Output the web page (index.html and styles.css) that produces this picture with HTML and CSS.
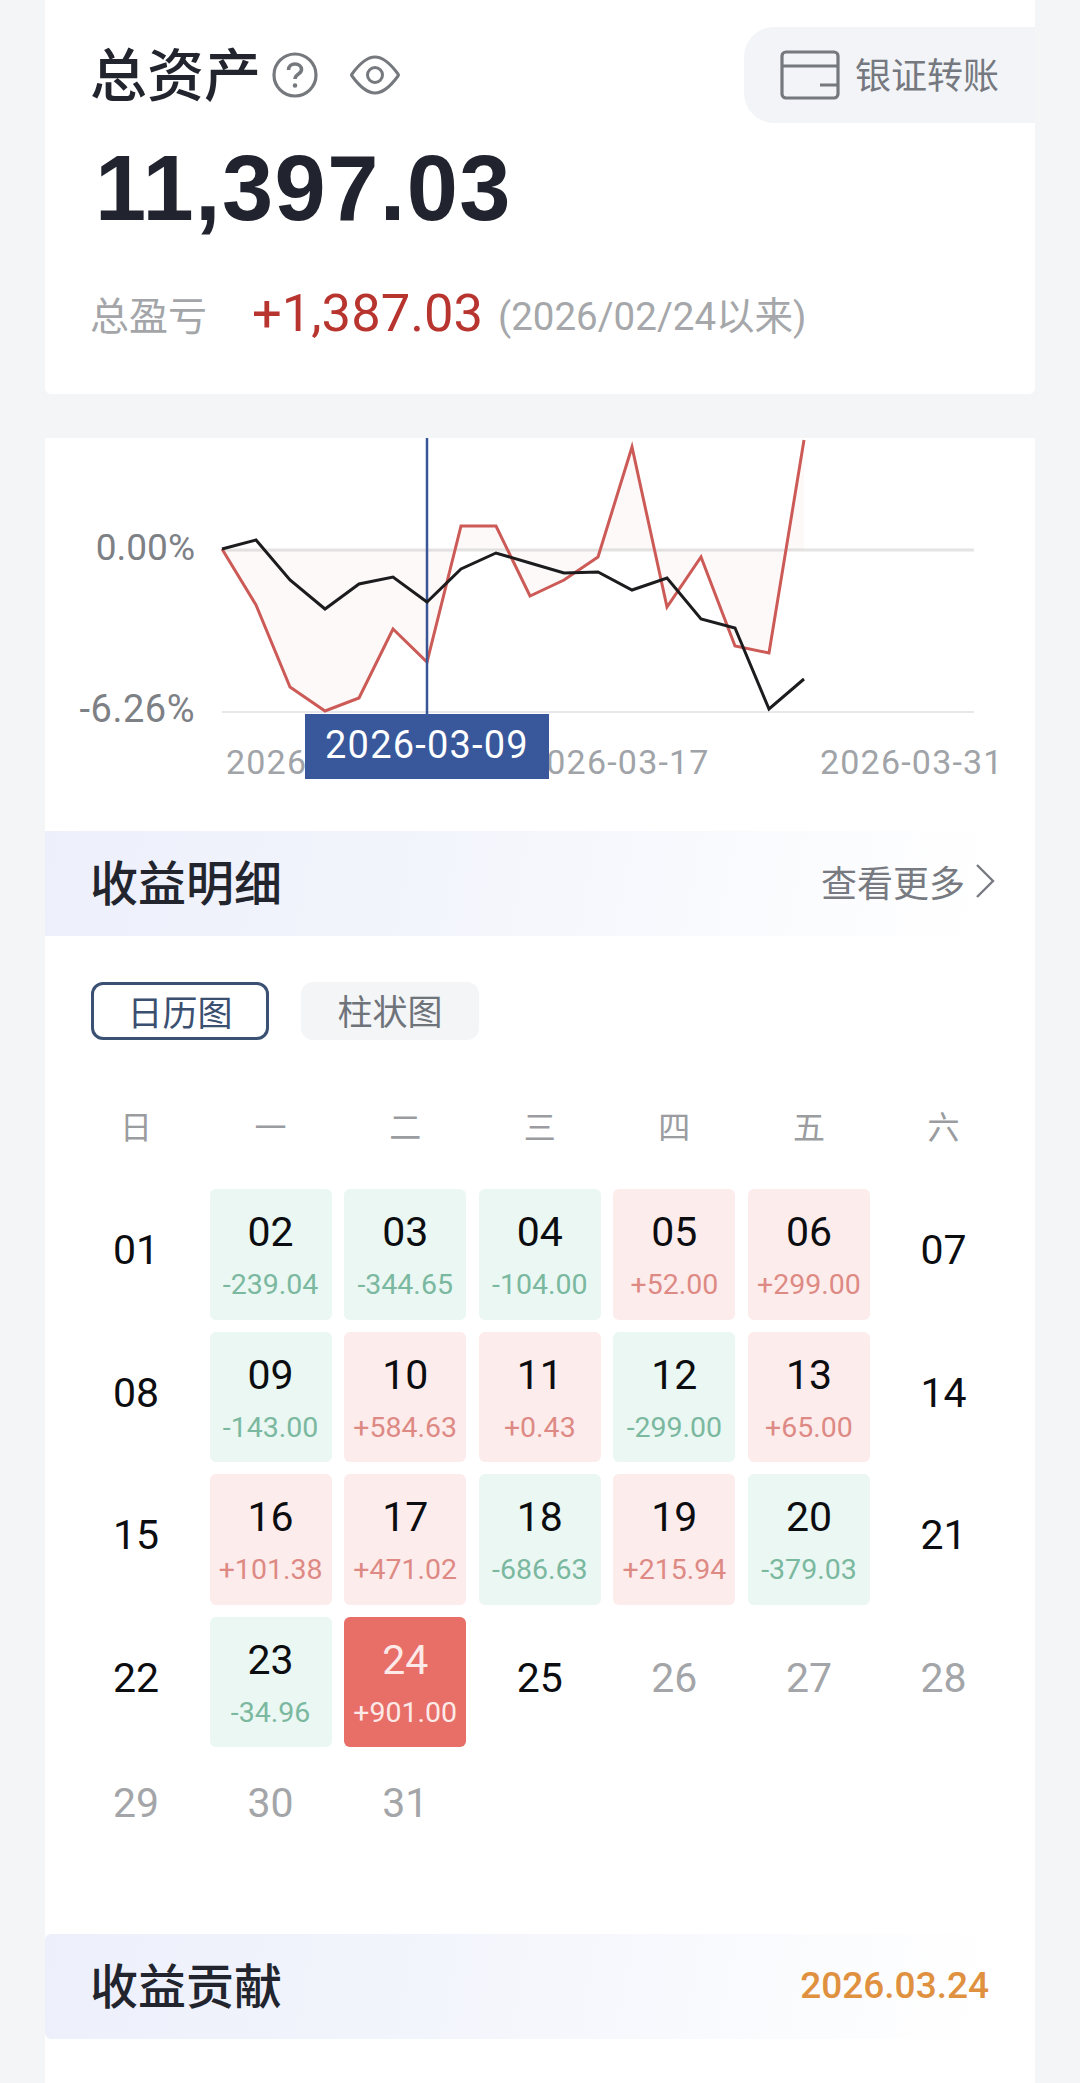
FILE: index.html
```html
<!DOCTYPE html>
<html lang="zh-CN">
<head>
  <meta charset="UTF-8" />
  <title>总资产</title>
  <link rel="stylesheet" href="styles.css">
</head>
<body>

  <!-- Summary -->
  <section class="card summary">
    <div class="summary-head">
      <h1>总资产</h1>
      <svg class="icon-help" viewBox="0 0 46 46">
        <circle cx="23" cy="23" r="21" fill="none" stroke="#75787d" stroke-width="3.200"/>
        <path d="M16.500 18c0-3.800 2.900-6 6.500-6s6.500 2.300 6.500 5.500c0 4.700-6.500 4.600-6.500 9.500" fill="none" stroke="#75787d" stroke-width="3.600"/>
        <circle cx="23" cy="33.500" r="2.300" fill="#75787d"/>
      </svg>
      <svg class="icon-eye" viewBox="0 0 52 40">
        <path d="M3 19C11 8 18 2 26 2s15 6 23 17q1 1 0 2C41 32 34 38 26 38S11 32 3 21q-1-1 0-2z" fill="none" stroke="#75787d" stroke-width="3" stroke-linejoin="round"/>
        <circle cx="26" cy="20" r="7.500" fill="none" stroke="#75787d" stroke-width="3"/>
      </svg>
      <a class="transfer">
        <svg class="icon-bank" viewBox="0 0 60 50">
          <rect x="2" y="2" width="56" height="46" rx="4" fill="none" stroke="#75787d" stroke-width="3.200"/>
          <path d="M2 16h56M40 35h18" fill="none" stroke="#75787d" stroke-width="3.200"/>
        </svg>
        <span>银证转账</span>
      </a>
    </div>
    <div class="total">11,397.03</div>
    <div class="profit">
      <span class="profit-label">总盈亏</span>
      <span class="profit-value">+1,387.03</span>
      <span class="profit-since">(2026/02/24以来)</span>
    </div>
  </section>

  <!-- Trend chart -->
  <section class="card chart">
    <svg class="chart-svg" viewBox="45 438 990 393">
      <line class="line-zero" x1="222" y1="550" x2="974" y2="550"/>
      <line class="line-low" x1="222" y1="712" x2="974" y2="712"/>
      <polygon class="area" points="222,549 256,605 290,687 325,711 359,698 393,629 427,662 461,526 496,526 530,596 564,580 598,557 632,447 667,607 701,557 735,646 769,653 804,440 804,550 222,550"/>
      <polyline class="line-red" points="222,549 256,605 290,687 325,711 359,698 393,629 427,662 461,526 496,526 530,596 564,580 598,557 632,447 667,607 701,557 735,646 769,653 804,440"/>
      <line class="crosshair" x1="427" y1="438" x2="427" y2="714"/>
      <polyline class="line-black" points="222,549 256,540 290,580 325,609 359,584 393,577 427,602 461,569 496,553 530,563 564,573 598,572 632,590 667,578 701,619 735,628 769,709 804,679"/>
      <text class="axis-y" x="195" y="560">0.00%</text>
      <text class="axis-y axis-neg" x="195" y="722">-6.26%</text>
      <text class="axis-x" x="226" y="774">2026</text>
      <text class="axis-x" x="526" y="774">2026-03-17</text>
      <text class="axis-x" x="820" y="774">2026-03-31</text>
      <rect class="tip-box" x="305" y="714" width="244" height="65"/>
      <text class="tip-text" x="427" y="758">2026-03-09</text>
    </svg>
  </section>

  <!-- Income detail -->
  <section class="card detail">
    <div class="section-head">
      <h2>收益明细</h2>
      <a class="more">查看更多
        <svg class="icon-chevron" viewBox="0 0 20 34">
          <path d="M2 1l16 16L2 33" fill="none" stroke="#777a80" stroke-width="2.400"/>
        </svg>
      </a>
    </div>

    <div class="tabs">
      <button class="tab active">日历图</button>
      <button class="tab">柱状图</button>
    </div>

    <div class="week">
      <span>日</span><span>一</span><span>二</span><span>三</span><span>四</span><span>五</span><span>六</span>
    </div>

    <div class="calendar">
      <div class="day"><b>01</b></div>
      <div class="day down"><b>02</b><small>-239.04</small></div>
      <div class="day down"><b>03</b><small>-344.65</small></div>
      <div class="day down"><b>04</b><small>-104.00</small></div>
      <div class="day up"><b>05</b><small>+52.00</small></div>
      <div class="day up"><b>06</b><small>+299.00</small></div>
      <div class="day"><b>07</b></div>

      <div class="day"><b>08</b></div>
      <div class="day down"><b>09</b><small>-143.00</small></div>
      <div class="day up"><b>10</b><small>+584.63</small></div>
      <div class="day up"><b>11</b><small>+0.43</small></div>
      <div class="day down"><b>12</b><small>-299.00</small></div>
      <div class="day up"><b>13</b><small>+65.00</small></div>
      <div class="day"><b>14</b></div>

      <div class="day"><b>15</b></div>
      <div class="day up"><b>16</b><small>+101.38</small></div>
      <div class="day up"><b>17</b><small>+471.02</small></div>
      <div class="day down"><b>18</b><small>-686.63</small></div>
      <div class="day up"><b>19</b><small>+215.94</small></div>
      <div class="day down"><b>20</b><small>-379.03</small></div>
      <div class="day"><b>21</b></div>

      <div class="day"><b>22</b></div>
      <div class="day down"><b>23</b><small>-34.96</small></div>
      <div class="day today"><b>24</b><small>+901.00</small></div>
      <div class="day"><b>25</b></div>
      <div class="day future"><b>26</b></div>
      <div class="day future"><b>27</b></div>
      <div class="day future"><b>28</b></div>

      <div class="day future short"><b>29</b></div>
      <div class="day future short"><b>30</b></div>
      <div class="day future short"><b>31</b></div>
    </div>

    <div class="section-head contrib">
      <h2>收益贡献</h2>
      <span class="date">2026.03.24</span>
    </div>
  </section>

</body>
</html>
```

FILE: styles.css
```css
/* Base */
html, body {
  margin: 0;
  padding: 0;
}

body {
  background: #f4f5f7;
  font-family: Roboto, "Noto Sans CJK SC", sans-serif;
  color: #22252e;
  height: 2083px;
  overflow: hidden;
}

.card {
  width: 990px;
  margin-left: 45px;
  background: #fff;
}

h1, h2 {
  margin: 0;
  font-family: "Noto Sans CJK SC", sans-serif;
}

/* Summary */
.summary {
  height: 394px;
  padding: 27px 0 0 48px;
  box-sizing: border-box;
  border-radius: 0 0 6px 6px;
}

.summary-head {
  display: flex;
  align-items: center;
  height: 96px;
}

.summary-head h1 {
  margin-left: -3px;
  padding-bottom: 8px;
  font-size: 57px;
  font-weight: 500;
  line-height: 88px;
}

.icon-help {
  width: 46px;
  height: 46px;
  margin-left: 11px;
}

.icon-eye {
  width: 52px;
  height: 40px;
  margin-left: 31px;
}

.transfer {
  display: flex;
  align-items: center;
  margin-left: auto;
  width: 291px;
  height: 96px;
  box-sizing: border-box;
  padding: 0 0 0 36px;
  gap: 15px;
  background: #f2f4f7;
  border-radius: 30px 0 0 30px;
  color: #75787f;
  font-family: "Noto Sans CJK SC", sans-serif;
  font-size: 36px;
}

.transfer span {
  padding-bottom: 4px;
}

.icon-bank {
  width: 60px;
  height: 50px;
}

.total {
  margin-top: 19px;
  margin-left: 2px;
  font-family: "Liberation Sans", sans-serif;
  font-size: 92px;
  font-weight: 700;
  letter-spacing: 1.4px;
  line-height: 92px;
  color: #21242f;
}

.profit {
  display: flex;
  align-items: center;
  margin-top: 49px;
  margin-left: -3px;
  height: 60px;
}

.profit-label {
  font-size: 39px;
  color: #a3a5a8;
  width: 162px;
}

.profit-value {
  font-size: 52.500px;
  color: #b8352f;
  width: 246px;
}

.profit-since {
  font-size: 38.500px;
  color: #a5a7aa;
}

/* Trend chart */
.chart {
  height: 393px;
  margin-top: 44px;
}

.chart-svg {
  display: block;
  width: 990px;
  height: 393px;
}

.line-zero {
  stroke: #e4e4e4;
  stroke-width: 3;
}

.line-low {
  stroke: #e6e8ec;
  stroke-width: 2;
}

.area {
  fill: #d9534a;
  fill-opacity: 0.035;
}

.line-red {
  fill: none;
  stroke: #cc5b57;
  stroke-width: 3;
}

.line-black {
  fill: none;
  stroke: #1c1c1e;
  stroke-width: 3;
}

.crosshair {
  stroke: #3a5596;
  stroke-width: 2.500;
}

.axis-y {
  font-size: 37px;
  fill: #7d8085;
  text-anchor: end;
}

.axis-neg {
  font-size: 38px;
  letter-spacing: 0.5px;
}

.axis-x {
  font-size: 34px;
  letter-spacing: 1.2px;
  fill: #a0a3a7;
}

.tip-box {
  fill: #38589b;
}

.tip-text {
  font-size: 38px;
  letter-spacing: 1.200px;
  fill: #fff;
  text-anchor: middle;
}

/* Income detail */
.detail {
  height: 1252px;
}

.section-head {
  display: flex;
  align-items: center;
  justify-content: space-between;
  height: 105px;
  box-sizing: border-box;
  padding: 0 40px 0 45px;
  background: linear-gradient(100deg, #edf0fb 0%, #f3f5fc 40%, #fff 95%);
}

.section-head h2 {
  padding-bottom: 8px;
  font-size: 48px;
  font-weight: 500;
}

.more {
  display: flex;
  align-items: center;
  gap: 10px;
  padding-bottom: 5px;
  font-size: 36px;
  color: #777a80;
}

.icon-chevron {
  width: 20px;
  height: 34px;
}

.tabs {
  display: flex;
  gap: 32px;
  margin: 46px 0 0 46px;
}

.tab {
  width: 178px;
  height: 58px;
  padding: 0 0 3px;
  border: none;
  border-radius: 12px;
  background: #f3f5f7;
  color: #6f737a;
  font-family: "Noto Sans CJK SC", sans-serif;
  font-size: 35px;
}

.tab.active {
  background: #fff;
  border: 3px solid #3b5173;
  color: #3b4f70;
}

.week,
.calendar {
  display: grid;
  grid-template-columns: repeat(7, 122px);
  column-gap: 12.600px;
  padding-left: 30px;
}

.week {
  margin-top: 63px;
  text-align: center;
  font-family: "Noto Sans CJK SC", sans-serif;
  font-size: 32px;
  line-height: 44px;
  color: #9a9c9f;
}

.calendar {
  margin-top: 42px;
  row-gap: 12px;
}

.day {
  display: flex;
  flex-direction: column;
  align-items: center;
  justify-content: center;
  height: 130.500px;
  border-radius: 6px;
  padding-bottom: 8px;
  box-sizing: border-box;
  color: #0c0d10;
}

.day b {
  font-size: 41px;
  font-weight: 400;
  line-height: 48px;
}

.day small {
  font-size: 28.500px;
  line-height: 34px;
  margin-top: 12px;
}

.day.down,
.day.up,
.day.today {
  justify-content: flex-start;
  padding: 19px 0 0;
}

.down {
  background: #eaf7f2;
}

.down small {
  color: #7bb8a0;
}

.up {
  background: #fdecec;
}

.up small {
  color: #dd8a85;
}

.today {
  background: #e86e68;
  color: #fdeae8;
}

.future {
  color: #a3a5a8;
}

.day.short {
  height: 85px;
  padding: 3px 0 0;
}

.contrib {
  margin-top: 90px;
  border-radius: 6px;
  padding-right: 46px;
}

.date {
  padding-bottom: 2px;
  font-size: 37px;
  font-weight: 500;
  color: #e0913f;
}
```
